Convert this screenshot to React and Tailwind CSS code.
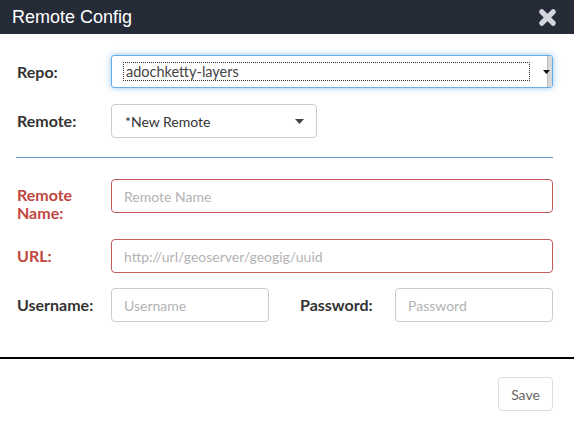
import React from 'react';

const Label = ({ children, error }) => (
  <label
    className={`block w-[94px] shrink-0 text-[16px] font-bold leading-[18px] ${error ? 'text-[#c0463f]' : 'text-[#333]'}`}
  >
    {children}
  </label>
);

const Caret = () => (
  <svg className="w-[9px] h-[5px]" viewBox="0 0 9 5">
    <path d="M0 0h9L4.5 5z" fill="#444" />
  </svg>
);

export default function App() {
  return (
    <div className="w-[574px] h-[427px] bg-white font-['Lato',sans-serif] overflow-hidden">
      {/* Header */}
      <div className="h-[34px] bg-[#262b38] flex items-center justify-between pl-[12px] pr-[17px]">
        <h1 className="font-['Liberation_Sans',Arial,sans-serif] text-[18px] text-white leading-none">
          Remote Config
        </h1>
        <svg className="w-[19px] h-[19px]" viewBox="0 0 20 20">
          <path
            d="M4 4 L16 16 M16 4 L4 16"
            stroke="#d3d6dc"
            strokeWidth="5.5"
            strokeLinecap="round"
          />
        </svg>
      </div>

      {/* Body */}
      <div className="pl-[16px] pr-[21px] pt-[21px]">
        <div className="flex items-center pl-[1px]">
          <Label>Repo:</Label>
          <div className="relative flex-1 h-[33px] border border-[#66afe9] rounded-[3px] shadow-[0_0_6px_rgba(102,175,233,0.7)] bg-white flex items-center">
            <div className="ml-[11px] w-[407px] h-[19px] border border-dotted border-[#333] flex items-center pl-[2px] text-[14.5px] text-[#444]">
              adochketty-layers
            </div>
            <div className="absolute right-0 top-0 bottom-0 w-[5px] bg-[#d8d8d8] border-l border-[#bbb] flex items-center justify-center">
              <svg className="w-[7px] h-[4px] -ml-[7px]" viewBox="0 0 7 4">
                <path d="M0 0h7L3.5 4z" fill="#111" />
              </svg>
            </div>
          </div>
        </div>

        <div className="flex items-center pl-[1px] mt-[16px]">
          <Label>Remote:</Label>
          <div className="w-[206px] h-[34px] border border-[#ccc] rounded-[4px] flex items-center justify-between pl-[13px] pr-[12px] text-[14px] text-[#333]">
            <span>*New Remote</span>
            <Caret />
          </div>
        </div>

        <div className="border-t border-[#5e97cc] mt-[19px]" />

        <div className="flex items-start pl-[1px] mt-[21px]">
          <div className="w-[94px] shrink-0 pt-[7px]">
            <Label error>
              Remote
              <br />
              Name:
            </Label>
          </div>
          <input
            placeholder="Remote Name"
            className="flex-1 h-[34px] border border-[#c65a55] rounded-[4px] px-[12px] text-[14px] placeholder:text-[#b3b3b3] outline-none"
          />
        </div>

        <div className="flex items-center pl-[1px] mt-[17px]">
          <Label error>URL:</Label>
          <input
            placeholder="http://url/geoserver/geogig/uuid"
            className="flex-1 h-[34px] border border-[#c65a55] rounded-[4px] px-[12px] text-[14px] placeholder:text-[#b3b3b3] outline-none"
          />
        </div>

        <div className="flex items-center pl-[1px] mt-[15px]">
          <Label>Username:</Label>
          <input
            placeholder="Username"
            className="w-[158px] h-[34px] border border-[#ccc] rounded-[4px] px-[12px] text-[14px] placeholder:text-[#b3b3b3] outline-none"
          />
          <label className="ml-[31px] w-[95px] shrink-0 text-[16px] font-bold text-[#333]">Password:</label>
          <input
            placeholder="Password"
            className="flex-1 min-w-0 h-[34px] border border-[#ccc] rounded-[4px] px-[12px] text-[14px] placeholder:text-[#b3b3b3] outline-none"
          />
        </div>
      </div>

      {/* Footer */}
      <div className="border-t-[2px] border-black mt-[35px]" />
      <div className="flex justify-end pr-[21px] pt-[18px]">
        <button className="w-[55px] h-[34px] border border-[#ddd] rounded-[4px] text-[14px] text-[#666] bg-white">
          Save
        </button>
      </div>
    </div>
  );
}
